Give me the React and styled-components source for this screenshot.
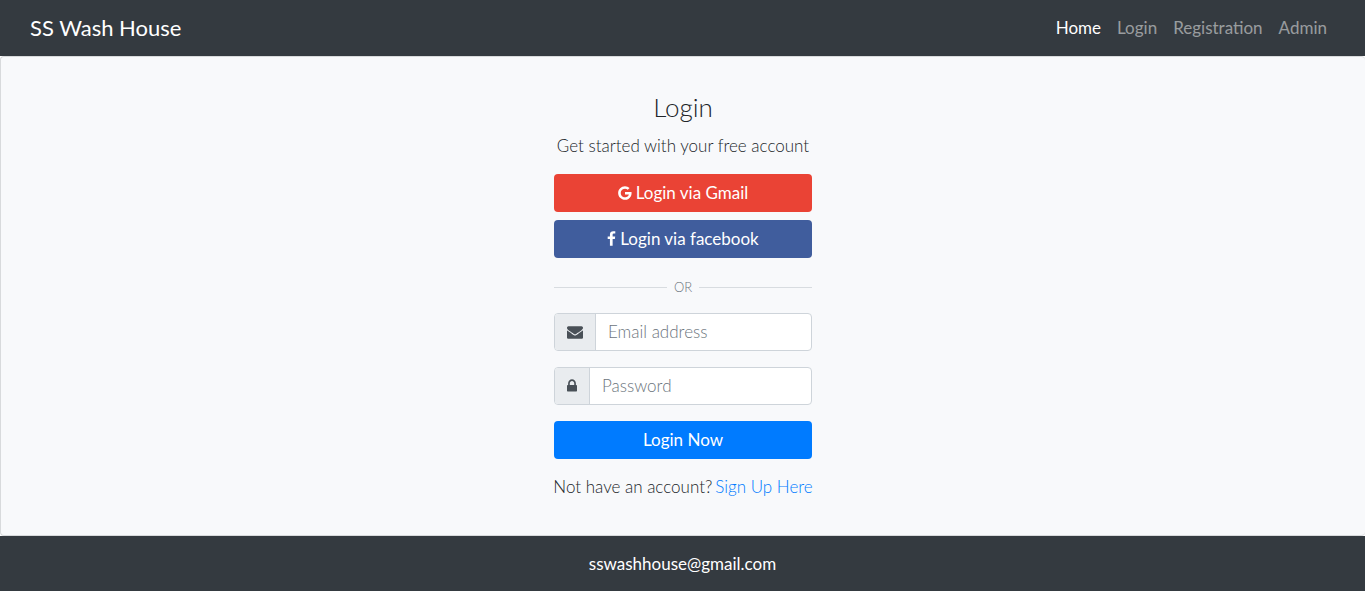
import React from "react";
import styled, { createGlobalStyle } from "styled-components";

const GlobalStyle = createGlobalStyle`
  *, *::before, *::after { box-sizing: border-box; }
  body {
    margin: 0;
    font-family: Lato, "Open Sans", sans-serif;
    font-size: 17px;
    font-weight: 300;
    line-height: 24px;
    color: #212529;
    background: #fff;
  }
`;

const Navbar = styled.nav`
  display: flex;
  align-items: center;
  justify-content: space-between;
  min-height: 56px;
  padding: 8px 30px;
  background: #343a40;
`;

const Brand = styled.a`
  font-size: 22px;
  font-weight: 400;
  line-height: 30px;
  color: #fff;
  text-decoration: none;
`;

const NavList = styled.ul`
  display: flex;
  margin: 0;
  padding: 0;
  list-style: none;
`;

const NavLink = styled.a`
  display: block;
  padding: 8px;
  font-weight: 400;
  color: ${(p) => (p.$active ? "#fff" : "rgba(255, 255, 255, 0.5)")};
  text-decoration: none;
`;

const Card = styled.main`
  display: flex;
  justify-content: center;
  padding: 34px 20px 36px;
  border: 1px solid #d8dadc;
  border-right-width: 0;
  border-radius: 4px;
  background: #f8f9fb;
`;

const Panel = styled.article`
  width: 258px;
  text-align: center;
`;

const Title = styled.h1`
  margin: 0 0 11px;
  font-size: 26px;
  font-weight: 300;
  line-height: 32px;
`;

const Intro = styled.p`
  margin: 0 0 16px;
  white-space: nowrap;
`;

const Button = styled.button`
  display: flex;
  align-items: center;
  justify-content: center;
  gap: 4px;
  width: 100%;
  height: 38px;
  margin: 0 0 ${(p) => (p.$spaced ? 16 : 8)}px;
  padding: 0 12px;
  border: 0;
  border-radius: 4px;
  font: inherit;
  font-weight: 400;
  color: #fff;
  background: ${(p) => p.$color};
  cursor: pointer;
`;

const Divider = styled.div`
  display: flex;
  align-items: center;
  gap: 7px;
  margin: 20px 0 17px;
  font-size: 13px;
  line-height: 18px;
  color: #6c757d;

  &::before,
  &::after {
    content: "";
    flex: 1;
    height: 1px;
    background: #d8dce0;
  }
`;

const Field = styled.div`
  display: flex;
  height: 38px;
  margin-bottom: 16px;
  border: 1px solid #ced4da;
  border-radius: 4px;
  background: #fff;
  overflow: hidden;
`;

const FieldLabel = styled.label`
  display: flex;
  align-items: center;
  padding: 0 12px;
  border-right: 1px solid #ced4da;
  color: #495057;
  background: #e9ecef;
`;

const Input = styled.input`
  flex: 1;
  min-width: 0;
  padding: 0 12px;
  border: 0;
  outline: 0;
  font: inherit;
  color: #495057;
  background: transparent;

  &::placeholder {
    color: #6c757d;
    opacity: 1;
  }
`;

const SignUp = styled.p`
  display: flex;
  justify-content: center;
  gap: 3px;
  margin: 0;
  white-space: nowrap;
`;

const SignUpLink = styled.a`
  color: #007bff;
  text-decoration: none;
`;

const Footer = styled.footer`
  padding: 16px;
  font-weight: 400;
  text-align: center;
  color: #fff;
  background: #343a40;
`;

const Glyph = styled.svg`
  display: block;
  flex: none;
  height: 16px;
  fill: currentColor;
`;

const GoogleIcon = () => (
  <Glyph viewBox="128 0 1536 1792" width="14" aria-hidden="true">
    <path d="M896 786h725q12 67 12 128 0 217-91 387.5t-259.5 266.5-386.5 96q-157 0-299-60.5t-245-163.5-163.5-245-60.5-299 60.5-299 163.5-245 245-163.5 299-60.5q300 0 515 201l-209 201q-123-119-306-119-129 0-238.5 65t-173.5 176.5-64 243.5 64 243.5 173.5 176.5 238.5 65q87 0 160-24t120-60 82-82 51.5-87 22.5-78h-436v-264z" />
  </Glyph>
);

const FacebookIcon = () => (
  <Glyph viewBox="400 0 1024 1792" width="9" aria-hidden="true">
    <path d="M1343 12v264h-157q-86 0-116 36t-30 108v189h293l-39 296h-254v759h-306v-759h-255v-296h255v-218q0-186 104-288.5t277-102.5q147 0 228 12z" />
  </Glyph>
);

const EnvelopeIcon = () => (
  <Glyph viewBox="0 0 1792 1792" width="16" aria-hidden="true">
    <path d="M1792 710v794q0 66-47 113t-113 47h-1472q-66 0-113-47t-47-113v-794q44 49 101 87 362 246 497 345 57 42 92.5 65.5t94.5 48 110 24.5h2q51 0 110-24.5t94.5-48 92.5-65.5q170-123 498-345 57-39 100-87zm0-294q0 79-49 151t-122 123q-376 261-468 325-10 7-42.5 31t-54 38.5-52 32.5-57.5 27-50 9h-2q-23 0-50-9t-57.5-27-52-32.5-54-38.5-42.5-31q-91-64-262-182.5t-205-142.5q-62-42-117-115.5t-55-136.5q0-78 41.5-130t118.5-52h1472q65 0 112.5 47t47.5 113z" />
  </Glyph>
);

const LockIcon = () => (
  <Glyph viewBox="320 0 1152 1792" width="10" aria-hidden="true">
    <path d="M640 768h512v-192q0-106-75-181t-181-75-181 75-75 181v192zm832 96v576q0 40-28 68t-68 28h-960q-40 0-68-28t-28-68v-576q0-40 28-68t68-28h32v-192q0-184 132-316t316-132 316 132 132 316v192h32q40 0 68 28t28 68z" />
  </Glyph>
);

const links = ["Home", "Login", "Registration", "Admin"];

export default function App() {
  return (
    <>
      <GlobalStyle />
      <Navbar>
        <Brand href="#home">SS Wash House</Brand>
        <NavList>
          {links.map((name, i) => (
            <li key={name}>
              <NavLink href={`#${name.toLowerCase()}`} $active={i === 0}>
                {name}
              </NavLink>
            </li>
          ))}
        </NavList>
      </Navbar>
      <Card>
        <Panel>
          <Title>Login</Title>
          <Intro>Get started with your free account</Intro>
          <Button type="button" $color="#ea4335">
            <GoogleIcon />
            Login via Gmail
          </Button>
          <Button type="button" $color="#405d9d">
            <FacebookIcon />
            Login via facebook
          </Button>
          <Divider>OR</Divider>
          <form onSubmit={(e) => e.preventDefault()}>
            <Field>
              <FieldLabel htmlFor="email" aria-label="Email address">
                <EnvelopeIcon />
              </FieldLabel>
              <Input id="email" type="email" placeholder="Email address" />
            </Field>
            <Field>
              <FieldLabel htmlFor="password" aria-label="Password">
                <LockIcon />
              </FieldLabel>
              <Input id="password" type="password" placeholder="Password" />
            </Field>
            <Button type="submit" $color="#007bff" $spaced>
              Login Now
            </Button>
          </form>
          <SignUp>
            <span>Not have an account?</span>
            <SignUpLink href="#registration">Sign Up Here</SignUpLink>
          </SignUp>
        </Panel>
      </Card>
      <Footer>sswashhouse@gmail.com</Footer>
    </>
  );
}
